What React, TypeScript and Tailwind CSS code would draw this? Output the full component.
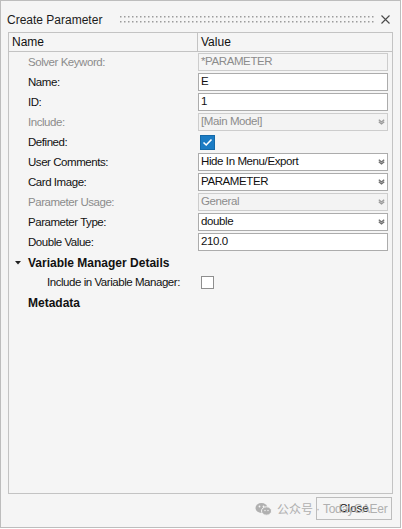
import React from "react";

function Chevron({ muted }: { muted?: boolean }) {
  return (
    <svg width="7" height="6" viewBox="0 0 7 6" className="shrink-0">
      <path
        d="M0.8 0.8 L3.5 3 L6.2 0.8 M0.8 2.8 L3.5 5 L6.2 2.8"
        stroke={muted ? "#9a9a9a" : "#6e6e6e"}
        strokeWidth="1.3"
        fill="none"
      />
    </svg>
  );
}

function TextBox({ value, disabled }: { value: string; disabled?: boolean }) {
  return (
    <div
      className={
        disabled
          ? "h-[18px] w-[190px] border border-[#cdcdcd] bg-[#f5f5f5] pl-[2px] flex items-center text-[11.5px] tracking-[-0.4px] text-[#8c8c8c]"
          : "h-[18px] w-[190px] border border-[#acacac] bg-white pl-[2px] flex items-center text-[11.5px] tracking-[-0.4px] text-[#111]"
      }
    >
      {value}
    </div>
  );
}

function Select({ value, disabled }: { value: string; disabled?: boolean }) {
  return (
    <div
      className={
        disabled
          ? "h-[18px] w-[190px] border border-[#cdcdcd] bg-[#f3f3f3] pl-[2px] pr-[2px] flex items-center justify-between text-[11.5px] tracking-[-0.4px] text-[#8c8c8c]"
          : "h-[18px] w-[190px] border border-[#acacac] bg-white pl-[2px] pr-[2px] flex items-center justify-between text-[11.5px] tracking-[-0.4px] text-[#111]"
      }
    >
      <span>{value}</span>
      <Chevron muted={disabled} />
    </div>
  );
}

function Row({
  label,
  disabled,
  children,
}: {
  label: string;
  disabled?: boolean;
  children?: React.ReactNode;
}) {
  return (
    <div className="flex h-[20px] items-center">
      <div
        className={
          "w-[189px] pl-[19px] pt-[1px] text-[11.5px] tracking-[-0.45px] " +
          (disabled ? "text-[#8c8c8c]" : "text-[#111]")
        }
      >
        {label}
      </div>
      <div className="flex-1 flex items-center">{children}</div>
    </div>
  );
}

function Grip() {
  const dots = [];
  for (let i = 0; i < 64; i++) {
    dots.push(<rect key={"a" + i} x={i * 4} y={0} width="1.5" height="1.5" fill="#9c9c9c" />);
    dots.push(<rect key={"b" + i} x={i * 4} y={5} width="1.5" height="1.5" fill="#9c9c9c" />);
  }
  return (
    <svg width="254" height="7" viewBox="0 0 254 7" className="shrink-0">
      {dots}
    </svg>
  );
}

export default function App() {
  return (
    <div className="w-[402px] h-[529px] bg-white font-['Liberation_Sans',Arial,sans-serif]">
      <div className="relative w-[401px] h-[528px] border border-[#bdbdbd] bg-[#f5f5f5] flex flex-col">
        {/* Title bar */}
        <div className="h-[31px] pt-[6px] flex items-center pl-[6px]">
          <span className="text-[12px] text-[#1b1b1b] w-[113px]">Create Parameter</span>
          <Grip />
          <svg width="9" height="9" viewBox="0 0 9 9" className="ml-[7px]">
            <path d="M0.5 0.5 L8.5 8.5 M8.5 0.5 L0.5 8.5" stroke="#4a4a4a" strokeWidth="1.1" />
          </svg>
        </div>

        {/* Table */}
        <div className="mx-[7px] h-[462px] border border-[#c3c3c3] flex flex-col">
          <div className="h-[19px] flex border-b border-[#c3c3c3] text-[12px] text-[#111]">
            <div className="w-[189px] border-r border-[#c3c3c3] pl-[3px] flex items-center">Name</div>
            <div className="pl-[3px] flex items-center">Value</div>
          </div>
          <Row label="Solver Keyword:" disabled>
            <TextBox value="*PARAMETER" disabled />
          </Row>
          <Row label="Name:">
            <TextBox value="E" />
          </Row>
          <Row label="ID:">
            <TextBox value="1" />
          </Row>
          <Row label="Include:" disabled>
            <Select value="[Main Model]" disabled />
          </Row>
          <Row label="Defined:">
            <div className="ml-[2px] w-[15px] h-[15px] bg-[#1b7cc4] border border-[#1469a8] flex items-center justify-center">
              <svg width="11" height="9" viewBox="0 0 11 9">
                <path d="M1.5 4.5 L4.2 7 L9.5 1.5" stroke="white" strokeWidth="1.6" fill="none" />
              </svg>
            </div>
          </Row>
          <Row label="User Comments:">
            <Select value="Hide In Menu/Export" />
          </Row>
          <Row label="Card Image:">
            <Select value="PARAMETER" />
          </Row>
          <Row label="Parameter Usage:" disabled>
            <Select value="General" disabled />
          </Row>
          <Row label="Parameter Type:">
            <Select value="double" />
          </Row>
          <Row label="Double Value:">
            <TextBox value="210.0" />
          </Row>
          <div className="flex h-[20px] items-center pt-[2px]">
            <svg width="6" height="4" viewBox="0 0 6 4" className="ml-[6px] mr-[7px]">
              <path d="M0 0 H6 L3 3.5 Z" fill="#222" />
            </svg>
            <span className="text-[12px] font-bold text-[#111]">Variable Manager Details</span>
          </div>
          <div className="flex h-[20px] items-center">
            <div className="w-[189px] pl-[38px] pt-[1px] text-[11.5px] tracking-[-0.45px] text-[#111]">
              Include in Variable Manager:
            </div>
            <div className="ml-[3px] w-[13px] h-[13px] border border-[#8e8e8e] bg-white" />
          </div>
          <div className="flex h-[20px] items-center pl-[19px] pt-[1px]">
            <span className="text-[12px] font-bold text-[#111]">Metadata</span>
          </div>
        </div>

        {/* Footer */}
        <div className="flex justify-end pr-[8px] pt-[3px]">
          <div className="relative w-[76px] h-[23px] border border-[#bdbdbd] bg-[#f5f5f5] flex items-center justify-center text-[11.5px] text-[#111]">
            Close
          </div>
        </div>

        {/* Watermark overlay */}
        <div className="absolute left-[254px] top-[499px] flex items-center whitespace-nowrap text-[#a9a9a9] opacity-90 pointer-events-none">
          <svg width="17" height="14" viewBox="0 0 17 14" className="mr-[5px]">
            <ellipse cx="6.5" cy="6" rx="6" ry="5" fill="#a9a9a9" />
            <ellipse cx="11.5" cy="9" rx="5" ry="4.2" fill="#a9a9a9" stroke="#f5f5f5" strokeWidth="1" />
            <circle cx="4.5" cy="4.5" r="0.9" fill="#f5f5f5" />
            <circle cx="8.5" cy="4.5" r="0.9" fill="#f5f5f5" />
            <circle cx="10" cy="8.5" r="0.7" fill="#f5f5f5" />
            <circle cx="13" cy="8.5" r="0.7" fill="#f5f5f5" />
          </svg>
          <span className="text-[12px] font-['Noto_Sans_CJK_SC',sans-serif]">公众号</span>
          <span className="text-[12px] mx-[3px]">·</span>
          <span className="text-[12px] tracking-[-0.3px]">TodayCAEer</span>
        </div>
      </div>
    </div>
  );
}
